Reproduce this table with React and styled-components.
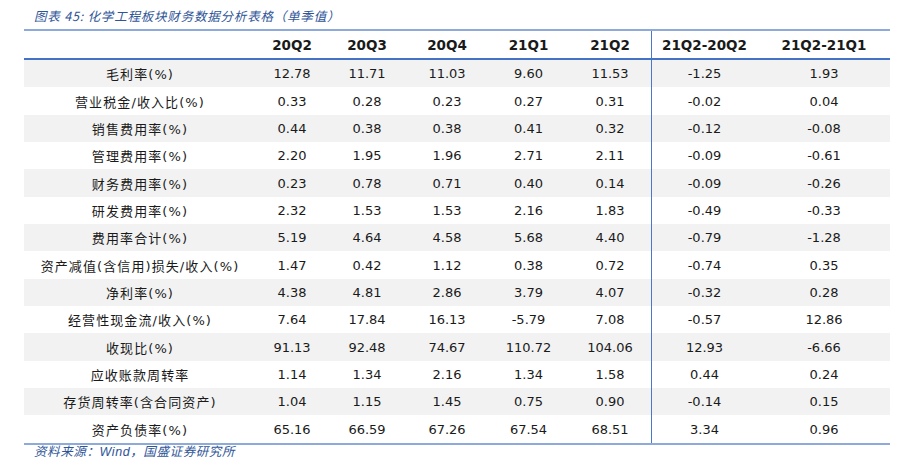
import React from 'react'
import styled, { createGlobalStyle } from 'styled-components'

const GlobalStyle = createGlobalStyle`
  body {
    margin: 0;
    background: #ffffff;
    font-family: "DejaVu Sans", "Noto Sans CJK SC", sans-serif;
  }
`;

const columns = ['20Q2', '20Q3', '20Q4', '21Q1', '21Q2', '21Q2-20Q2', '21Q2-21Q1'];
const widths = [232, 72, 78, 82, 81, 82, 106, 134];

const rows = [
  ['毛利率(%)', '12.78', '11.71', '11.03', '9.60', '11.53', '-1.25', '1.93'],
  ['营业税金/收入比(%)', '0.33', '0.28', '0.23', '0.27', '0.31', '-0.02', '0.04'],
  ['销售费用率(%)', '0.44', '0.38', '0.38', '0.41', '0.32', '-0.12', '-0.08'],
  ['管理费用率(%)', '2.20', '1.95', '1.96', '2.71', '2.11', '-0.09', '-0.61'],
  ['财务费用率(%)', '0.23', '0.78', '0.71', '0.40', '0.14', '-0.09', '-0.26'],
  ['研发费用率(%)', '2.32', '1.53', '1.53', '2.16', '1.83', '-0.49', '-0.33'],
  ['费用率合计(%)', '5.19', '4.64', '4.58', '5.68', '4.40', '-0.79', '-1.28'],
  ['资产减值(含信用)损失/收入(%)', '1.47', '0.42', '1.12', '0.38', '0.72', '-0.74', '0.35'],
  ['净利率(%)', '4.38', '4.81', '2.86', '3.79', '4.07', '-0.32', '0.28'],
  ['经营性现金流/收入(%)', '7.64', '17.84', '16.13', '-5.79', '7.08', '-0.57', '12.86'],
  ['收现比(%)', '91.13', '92.48', '74.67', '110.72', '104.06', '12.93', '-6.66'],
  ['应收账款周转率', '1.14', '1.34', '2.16', '1.34', '1.58', '0.44', '0.24'],
  ['存货周转率(含合同资产)', '1.04', '1.15', '1.45', '0.75', '0.90', '-0.14', '0.15'],
  ['资产负债率(%)', '65.16', '66.59', '67.26', '67.54', '68.51', '3.34', '0.96'],
];

const Page = styled.div`
  width: 908px;
  height: 469px;
  padding: 7px 18px 0 24px;
  box-sizing: border-box;
  color: #1a1a1a;
`;

const Caption = styled.div`
  font-family: "Noto Sans CJK SC", sans-serif;
  font-style: italic;
  font-size: 12.5px;
  color: #2f5597;
  padding-left: 10px;
  height: 22px;
  line-height: 18px;
  letter-spacing: 0.8px;
`;

const Table = styled.div`
  width: 866px;
  border-top: 2px solid #8eaadb;
  border-bottom: 2px solid #8eaadb;
`;

const Row = styled.div`
  display: grid;
  grid-template-columns: ${widths.map((w) => w + 'px').join(' ')};
  height: ${(p) => (p.$head ? '27px' : '27.35px')};
  background: ${(p) => (p.$shade ? '#f2f2f2' : '#ffffff')};
  border-bottom: ${(p) => (p.$head ? '2px solid #4472c4' : 'none')};
`;

const Cell = styled.div`
  display: flex;
  align-items: center;
  justify-content: center;
  font-size: ${(p) => (p.$head ? '13.5px' : '13px')};
  font-weight: ${(p) => (p.$head ? 'bold' : 'normal')};
  border-left: ${(p) => (p.$divider ? '1px solid #4a78c8' : 'none')};
  white-space: nowrap;
`;

const Label = styled(Cell)`
  font-family: "DejaVu Sans", "Noto Sans CJK SC", sans-serif;
  font-size: 13px;
  letter-spacing: 1.1px;
`;

const Source = styled.div`
  font-family: "Liberation Sans", "Noto Sans CJK SC", sans-serif;
  font-style: italic;
  font-size: 12.5px;
  line-height: 14px;
  color: #2f5597;
  padding: 0 0 0 10px;
  letter-spacing: 0.6px;
`;

export default function App() {
  return (
    <Page>
      <GlobalStyle />
      <Caption>图表 45: 化学工程板块财务数据分析表格（单季值）</Caption>
      <Table>
        <Row $head>
          <Cell $head />
          {columns.map((c, i) => (
            <Cell key={c} $head $divider={i === 5}>{c}</Cell>
          ))}
        </Row>
        {rows.map((r, idx) => (
          <Row key={r[0]} $shade={idx % 2 === 0}>
            <Label>{r[0]}</Label>
            {r.slice(1).map((v, i) => (
              <Cell key={i} $divider={i === 5}>{v}</Cell>
            ))}
          </Row>
        ))}
      </Table>
      <Source>资料来源：Wind，国盛证券研究所</Source>
    </Page>
  );
}
